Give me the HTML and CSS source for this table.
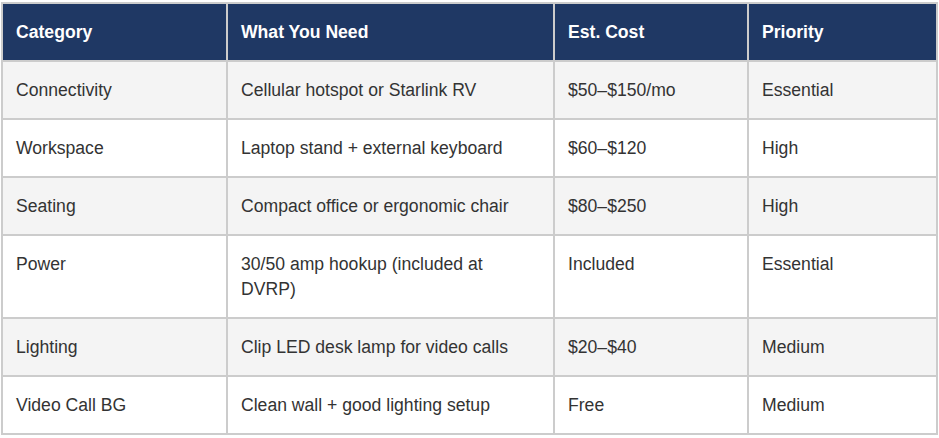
FILE: index.html
```html
<!DOCTYPE html>
<html>
<head>
<meta charset="utf-8">
<link rel="stylesheet" href="styles.css">
</head>
<body>
<table class="gear">
  <colgroup>
    <col class="c1"><col class="c2"><col class="c3"><col class="c4">
  </colgroup>
  <thead>
    <tr><th>Category</th><th>What You Need</th><th>Est. Cost</th><th>Priority</th></tr>
  </thead>
  <tbody>
    <tr><td>Connectivity</td><td>Cellular hotspot or Starlink RV</td><td>$50–$150/mo</td><td>Essential</td></tr>
    <tr><td>Workspace</td><td>Laptop stand + external keyboard</td><td>$60–$120</td><td>High</td></tr>
    <tr><td>Seating</td><td>Compact office or ergonomic chair</td><td>$80–$250</td><td>High</td></tr>
    <tr><td>Power</td><td>30/50 amp hookup (included at DVRP)</td><td>Included</td><td>Essential</td></tr>
    <tr><td>Lighting</td><td>Clip LED desk lamp for video calls</td><td>$20–$40</td><td>Medium</td></tr>
    <tr><td>Video Call BG</td><td>Clean wall + good lighting setup</td><td>Free</td><td>Medium</td></tr>
  </tbody>
</table>
</body>
</html>
```
FILE: styles.css
```css
html, body { margin: 0; padding: 0; background: #fff; }
body { padding: 2px 0 0 1px; }
.gear {
  width: 935px;
  border-collapse: collapse;
  table-layout: fixed;
  font-family: "Liberation Sans", Arial, sans-serif;
  font-size: 17.6px;
  line-height: 25px;
  color: #333;
  border: 2px solid #ccc;
}
.c1 { width: 225px; }
.c2 { width: 327px; }
.c3 { width: 194px; }
.c4 { width: 189px; }
.gear th, .gear td {
  border: 2px solid #ccc;
  padding: 15.5px 13px;
  text-align: left;
  vertical-align: top;
}
.gear th {
  background: #1f3864;
  color: #fff;
  font-weight: bold;
}
.gear tbody tr:nth-child(odd) td { background: #f4f4f4; }
.gear tbody tr:nth-child(even) td { background: #fff; }
```
